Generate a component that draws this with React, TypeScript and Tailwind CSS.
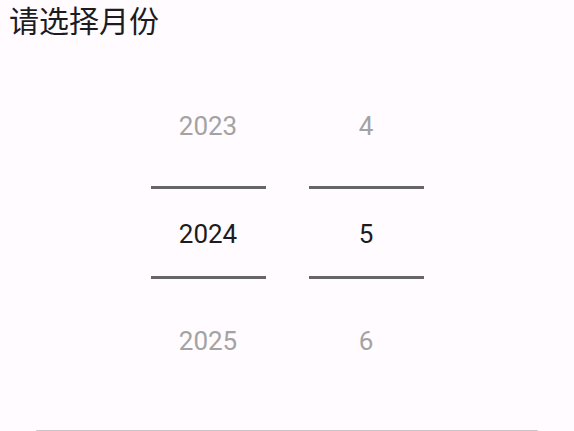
import React from 'react'

const years = ['2023', '2024', '2025']
const months = ['4', '5', '6']

const font = { fontFamily: 'Roboto, "Noto Sans CJK SC", sans-serif' }

// one wheel of the picker, selected value sits between the two bars
const Wheel = ({ items }: { items: string[] }) => {
  return (
    <div className="flex w-[115px] flex-col">
      <div className="flex h-[115px] items-center justify-center pb-[4px] text-[26px] text-[#a3a3a3]">
        {items[0]}
      </div>
      <div className="h-[3px] bg-[#666666]" />
      <div className="flex h-[87px] items-center justify-center pt-[4px] text-[26px] text-[#1c1b1f]">
        {items[1]}
      </div>
      <div className="h-[3px] bg-[#666666]" />
      <div className="flex h-[124px] items-center justify-center text-[26px] text-[#a3a3a3]">
        {items[2]}
      </div>
    </div>
  )
}

export default function App() {
  return (
    <div
      className="flex h-[431px] w-full flex-col overflow-hidden bg-[#fffbfe]"
      style={font}
    >
      <div className="flex h-[44px] items-center pl-[9px] text-[30px] leading-none text-[#1c1b1f]">
        请选择月份
      </div>
      <div className="mt-[27px] flex justify-center gap-[43px]">
        <Wheel items={years} />
        <Wheel items={months} />
      </div>
      <div className="mt-auto px-[36px]">
        <div className="h-px rounded-t-full bg-[#c9c5ca]" />
      </div>
    </div>
  )
}
